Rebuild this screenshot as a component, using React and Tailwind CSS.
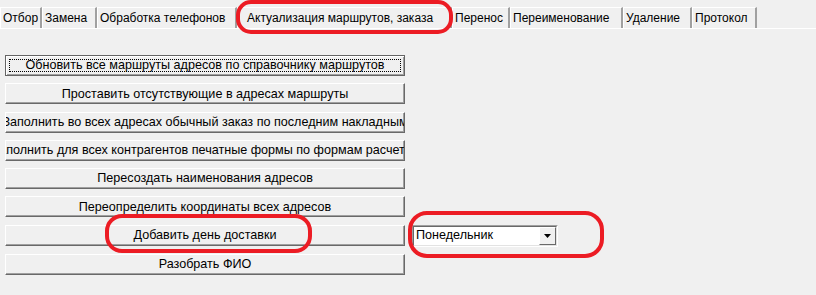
import React from "react";

const tabs = [
  { label: "Отбор", w: 42 },
  { label: "Замена", w: 55 },
  { label: "Обработка телефонов", w: 140 },
  { label: "Актуализация маршрутов, заказа", w: 215, active: true },
  { label: "Перенос", w: 58 },
  { label: "Переименование", w: 113 },
  { label: "Удаление", w: 69 },
  { label: "Протокол", w: 65 },
];

function Btn({ children, focused }) {
  return (
    <div
      className={
        "h-[21px] w-[400px] flex items-center justify-center overflow-hidden whitespace-nowrap bg-[#f0f0f0] text-[12.6px] " +
        (focused
          ? "border border-[#646464] shadow-[inset_1px_1px_0_#ffffff,inset_-1px_-1px_0_#a0a0a0]"
          : "border border-t-white border-l-white border-b-[#696969] border-r-[#696969] shadow-[inset_-1px_-1px_0_#a0a0a0]")
      }
    >
      {focused ? (
        <div className="mx-[3px] h-[13px] flex-1 border border-dotted border-black flex items-center justify-center">
          <span className="leading-none">{children}</span>
        </div>
      ) : (
        <span className="leading-none">{children}</span>
      )}
    </div>
  );
}

export default function App() {
  return (
    <div
      className="relative w-[816px] h-[295px] overflow-hidden bg-[#f0f0f0] text-[12px] text-black"
      style={{ fontFamily: '"Liberation Sans", Arial, sans-serif' }}
    >
      <div className="h-[7px]" />
      {/* tabs */}
      <div className="flex h-[21px] items-stretch text-[12px]">
        {tabs.map((t) => (
          <div
            key={t.label}
            style={{ width: t.w }}
            className={
              "flex items-center whitespace-nowrap overflow-hidden border-t border-l border-t-white border-l-white border-r-2 border-r-[#a0a0a0] " +
              (t.active ? "pl-[9px]" : "pl-[2px]")
            }
          >
            {t.label}
          </div>
        ))}
      </div>
      <div className="h-px bg-white w-[816px]" />

      <div className="flex flex-col gap-[7.3px] pl-[5px] pt-[26px]">
        <Btn focused>Обновить все маршруты адресов по справочнику маршрутов</Btn>
        <Btn>Проставить отсутствующие в адресах маршруты</Btn>
        <Btn>Заполнить во всех адресах обычный заказ по последним накладным</Btn>
        <Btn>Заполнить для всех контрагентов печатные формы по формам расчетов</Btn>
        <Btn>Пересоздать наименования адресов</Btn>
        <Btn>Переопределить координаты всех адресов</Btn>
        <div className="flex items-center">
          <Btn>Добавить день доставки</Btn>
          <div className="ml-[7px] w-[146px] h-[22px] border border-t-[#a0a0a0] border-l-[#a0a0a0] border-b-white border-r-white text-[12.6px]">
            <div className="h-full border border-t-[#696969] border-l-[#696969] border-b-[#e3e3e3] border-r-[#e3e3e3] bg-white flex items-center">
              <span className="flex-1 pl-[2px] leading-none">Понедельник</span>
              <div className="w-[17px] h-full bg-[#f0f0f0] border border-t-white border-l-white border-b-[#696969] border-r-[#696969] flex items-center justify-center">
                <svg width="7" height="4" viewBox="0 0 7 4">
                  <path d="M0 0H7L3.5 4Z" fill="#000" />
                </svg>
              </div>
            </div>
          </div>
        </div>
        <Btn>Разобрать ФИО</Btn>
      </div>

      <svg className="absolute inset-0 pointer-events-none" width="816" height="295">
        <rect x="238" y="2" width="213" height="30" rx="13" fill="none" stroke="#ec1c24" strokeWidth="4" />
        <rect x="107" y="216" width="203" height="35" rx="15" fill="none" stroke="#ec1c24" strokeWidth="4" />
        <rect x="410" y="213" width="192" height="43" rx="17" fill="none" stroke="#ec1c24" strokeWidth="4" />
      </svg>
    </div>
  );
}
